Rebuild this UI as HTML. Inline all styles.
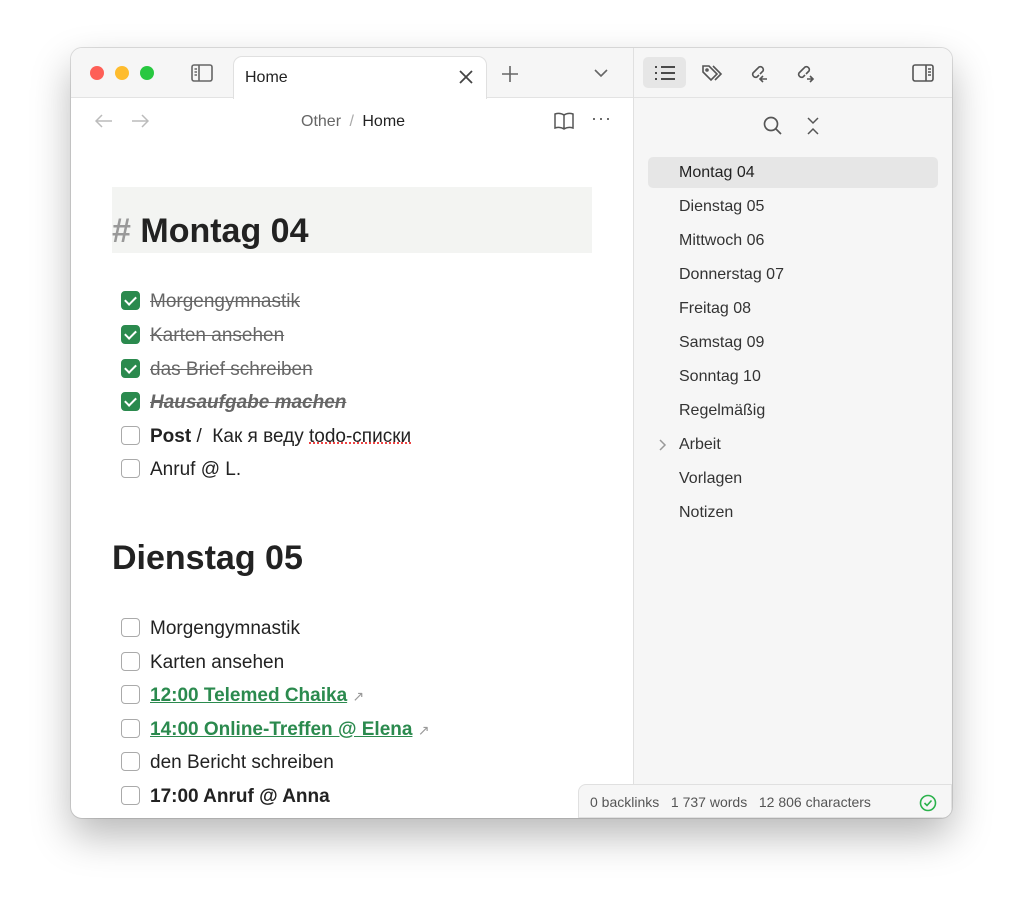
<!DOCTYPE html>
<html><head><meta charset="utf-8"><style>
*{margin:0;padding:0;box-sizing:border-box}
body{width:1023px;height:912px;background:#fff;font-family:"Liberation Sans","DejaVu Sans",sans-serif;position:relative;overflow:hidden}
.win{position:absolute;left:71px;top:48px;width:881px;height:770px;border-radius:11px;overflow:hidden;background:#fff;box-shadow:0 18px 40px rgba(0,0,0,.28),0 0 0 1px rgba(0,0,0,.12)}
.tabbar{position:absolute;left:0;top:0;width:562px;height:50px;background:#f6f6f6;border-bottom:1px solid #e3e3e3}
.dot{position:absolute;top:18px;width:14px;height:14px;border-radius:50%}
.tab{position:absolute;left:162px;top:8px;width:254px;height:43px;background:#fff;border:1px solid #e0e0e0;border-bottom:none;border-radius:9px 9px 0 0;font-size:16px;color:#222;padding:12px 0 0 11px}
.side{position:absolute;left:562px;top:0;width:319px;height:770px;background:#f6f6f6;border-left:1px solid #e0e0e0}
.sidetop{position:absolute;left:0;top:0;width:319px;height:50px;border-bottom:1px solid #e3e3e3}
.it{position:absolute;left:45px;font-size:16px;color:#333}
.main{position:absolute;left:0;top:0;width:562px}
.row{position:absolute;left:50px;font-size:19px;color:#222;white-space:nowrap}
.cb{display:inline-block;width:19px;height:19px;border:1.5px solid #aaa;border-radius:4px;vertical-align:-3px;margin-right:10px;background:#fff}
.cb.on{background:#2b8a4e;border-color:#2b8a4e;position:relative}
.cb.on:after{content:"";position:absolute;left:5px;top:2px;width:5px;height:9px;border:solid #fff;border-width:0 2px 2px 0;transform:rotate(45deg)}
.done{color:#666;text-decoration:line-through}
.lnk{color:#2b8a4e;font-weight:bold;text-decoration:underline}
.ext{font-size:14px;color:#999}
svg{position:absolute}
</style></head><body>
<div class="win">
 <div class="tabbar">
  <div class="dot" style="left:19px;background:#fe5f57"></div>
  <div class="dot" style="left:44px;background:#febc2e"></div>
  <div class="dot" style="left:69px;background:#28c840"></div>
  <svg style="left:120px;top:16px" width="22" height="18" viewBox="0 0 22 18" fill="none" stroke="#666" stroke-width="1.6"><rect x="1" y="1" width="20" height="16" rx="2"/><line x1="8" y1="1" x2="8" y2="17"/><line x1="3.5" y1="5" x2="6" y2="5"/><line x1="3.5" y1="8" x2="6" y2="8"/><line x1="3.5" y1="11" x2="6" y2="11"/></svg>
  <div class="tab">Home</div>
  <svg style="left:388px;top:22px" width="14" height="14" stroke="#444" stroke-width="1.8"><line x1="1" y1="1" x2="13" y2="13"/><line x1="13" y1="1" x2="1" y2="13"/></svg>
  <svg style="left:431px;top:18px" width="16" height="16" stroke="#666" stroke-width="1.6"><line x1="8" y1="0" x2="8" y2="16"/><line x1="0" y1="8" x2="16" y2="8"/></svg>
  <svg style="left:523px;top:21px" width="14" height="9" fill="none" stroke="#666" stroke-width="1.6"><polyline points="1,1 7,7 13,1"/></svg>
 </div>
 <div class="main">
  <svg style="left:24px;top:66px" width="18" height="14" fill="none" stroke="#bbb" stroke-width="1.5"><line x1="1" y1="7" x2="17" y2="7"/><polyline points="7,1 1,7 7,13"/></svg>
  <svg style="left:60px;top:66px" width="18" height="14" fill="none" stroke="#bbb" stroke-width="1.5"><line x1="1" y1="7" x2="17" y2="7"/><polyline points="11,1 17,7 11,13"/></svg>
  <div style="position:absolute;left:230px;top:65px;font-size:16px;color:#666">Other <span style="color:#aaa;margin:0 4px">/</span> <span style="color:#222">Home</span></div>
  <svg style="left:483px;top:64px" width="20" height="18" fill="none" stroke="#555" stroke-width="1.5"><path d="M10 3 C7 1 4 1 1 2 V16 C4 15 7 15 10 17 C13 15 16 15 19 16 V2 C16 1 13 1 10 3 Z M10 3 V17"/></svg>
  <div style="position:absolute;left:520px;top:60px;font-size:18px;color:#555;letter-spacing:1px">···</div>
  <div style="position:absolute;left:41px;top:139px;width:480px;height:66px;background:#f3f4f2"></div>
  <div style="position:absolute;left:41px;top:164px;font-size:34px;font-weight:bold;color:#222"><span style="color:#999">#</span> Montag 04</div>
  <div class="row" style="top:243px"><span class="cb on"></span><span class="done">Morgengymnastik</span></div>
  <div class="row" style="top:277px"><span class="cb on"></span><span class="done">Karten ansehen</span></div>
  <div class="row" style="top:311px"><span class="cb on"></span><span class="done">das Brief schreiben</span></div>
  <div class="row" style="top:344px"><span class="cb on"></span><span class="done" style="font-weight:bold;font-style:italic">Hausaufgabe machen</span></div>
  <div class="row" style="top:378px"><span class="cb"></span><b>Post</b> /&nbsp; Как я веду <span style="text-decoration:underline dotted #e44">todo-списки</span></div>
  <div class="row" style="top:411px"><span class="cb"></span>Anruf @ L.</div>
  <div style="position:absolute;left:41px;top:491px;font-size:34px;font-weight:bold;color:#222">Dienstag 05</div>
  <div class="row" style="top:570px"><span class="cb"></span>Morgengymnastik</div>
  <div class="row" style="top:604px"><span class="cb"></span>Karten ansehen</div>
  <div class="row" style="top:637px"><span class="cb"></span><span class="lnk">12:00 Telemed Chaika</span> <span class="ext">↗</span></div>
  <div class="row" style="top:671px"><span class="cb"></span><span class="lnk">14:00 Online-Treffen @ Elena</span> <span class="ext">↗</span></div>
  <div class="row" style="top:704px"><span class="cb"></span>den Bericht schreiben</div>
  <div class="row" style="top:738px"><span class="cb"></span><b>17:00 Anruf @ Anna</b></div>
  <div class="row" style="top:772px"><span class="cb"></span></div>
 </div>
 <div class="side">
  <div class="sidetop">
   <div style="position:absolute;left:9px;top:9px;width:43px;height:31px;background:#e6e6e6;border-radius:5px"></div>
   <svg style="left:20px;top:17px" width="22" height="16" stroke="#333" stroke-width="1.8"><line x1="1" y1="2" x2="3" y2="2"/><line x1="1" y1="8" x2="3" y2="8"/><line x1="1" y1="14" x2="3" y2="14"/><line x1="7" y1="2" x2="21" y2="2"/><line x1="7" y1="8" x2="21" y2="8"/><line x1="7" y1="14" x2="21" y2="14"/></svg>
   <svg style="left:67px;top:15px" width="24" height="20" fill="none" stroke="#555" stroke-width="1.6"><path d="M2 3 V9 L10 17 L16 11 L8 3 Z"/><circle cx="6" cy="7" r="1"/><path d="M12 3 L20 11 L14 17"/></svg>
   <svg style="left:113px;top:13px" width="24" height="24" fill="none" stroke="#555" stroke-width="1.6"><path d="M8 10 L12 6 a3 3 0 0 1 4 4 L13 13 M10 8 L6 12 a3 3 0 0 0 4 4 L12 14"/><path d="M16 20 H22 M18 17 L15 20 L18 23" transform="translate(-2,-2)"/></svg>
   <svg style="left:159px;top:13px" width="24" height="24" fill="none" stroke="#555" stroke-width="1.6"><path d="M8 10 L12 6 a3 3 0 0 1 4 4 L13 13 M10 8 L6 12 a3 3 0 0 0 4 4 L12 14"/><path d="M14 18 H20 M17 15 L20 18 L17 21"/></svg>
   <svg style="left:278px;top:16px" width="22" height="18" fill="none" stroke="#555" stroke-width="1.6"><rect x="1" y="1" width="20" height="16" rx="2"/><line x1="14" y1="1" x2="14" y2="17"/><line x1="16" y1="5" x2="19" y2="5"/><line x1="16" y1="8" x2="19" y2="8"/><line x1="16" y1="11" x2="19" y2="11"/></svg>
  </div>
  <svg style="left:129px;top:68px" width="20" height="20" fill="none" stroke="#555" stroke-width="1.7"><circle cx="8" cy="8" r="6.5"/><line x1="13" y1="13" x2="18" y2="18"/></svg>
  <svg style="left:172px;top:68px" width="14" height="20" fill="none" stroke="#555" stroke-width="1.5"><polyline points="2,2 7,7 12,2"/><polyline points="2,18 7,13 12,18"/></svg>
  <div style="position:absolute;left:14px;top:109px;width:290px;height:31px;background:#e6e6e6;border-radius:5px"></div>
  <div class="it" style="top:116px;color:#222">Montag 04</div>
  <div class="it" style="top:150px">Dienstag 05</div>
  <div class="it" style="top:184px">Mittwoch 06</div>
  <div class="it" style="top:218px">Donnerstag 07</div>
  <div class="it" style="top:252px">Freitag 08</div>
  <div class="it" style="top:286px">Samstag 09</div>
  <div class="it" style="top:320px">Sonntag 10</div>
  <div class="it" style="top:354px">Regelmäßig</div>
  <svg style="left:25px;top:391px" width="8" height="12" fill="none" stroke="#999" stroke-width="1.5"><polyline points="1,1 6,6 1,11"/></svg>
  <div class="it" style="top:388px">Arbeit</div>
  <div class="it" style="top:422px">Vorlagen</div>
  <div class="it" style="top:456px">Notizen</div>
 </div>
 <div style="position:absolute;left:507px;top:736px;width:374px;height:34px;background:#f6f6f6;border:1px solid #e0e0e0;border-radius:8px 0 0 0;font-size:14px;color:#555;padding:9px 0 0 11px;white-space:nowrap">0 backlinks&nbsp;&nbsp;&nbsp;1 737 words&nbsp;&nbsp;&nbsp;12 806 characters
  <svg style="left:340px;top:9px" width="18" height="18" fill="none" stroke="#2bb24c" stroke-width="1.6"><circle cx="9" cy="9" r="7.5"/><polyline points="5.5,9 8,11.5 12.5,6.5"/></svg></div>
</div>
</body></html>
